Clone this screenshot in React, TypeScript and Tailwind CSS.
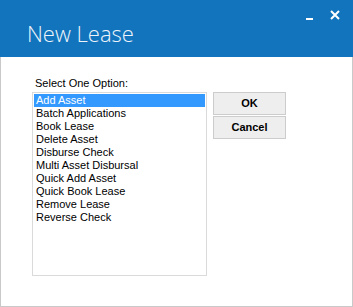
import { useState } from "react";

const options = [
  "Add Asset",
  "Batch Applications",
  "Book Lease",
  "Delete Asset",
  "Disburse Check",
  "Multi Asset Disbursal",
  "Quick Add Asset",
  "Quick Book Lease",
  "Remove Lease",
  "Reverse Check",
];

export default function App() {
  const [selected, setSelected] = useState("Add Asset");

  return (
    <div className="flex h-[307px] w-[353px] flex-col bg-white font-['Liberation_Sans',Arial,sans-serif] text-[11px] text-black">
      {/* Title bar */}
      <div className="flex h-[57px] shrink-0 items-start justify-between bg-[#1174bd]">
        <h1 className="pl-[27px] pt-[18px] font-['Open_Sans',sans-serif] text-[22px] font-light leading-[30px] text-[#eef4fa]">
          New Lease
        </h1>
        <div className="flex items-start gap-[17px] pr-[13px] pt-[10px]">
          <svg width="7" height="10" viewBox="0 0 7 10">
            <rect x="0" y="8" width="7" height="2" fill="#ffffff" />
          </svg>
          <svg width="10" height="10" viewBox="0 0 10 10">
            <path
              d="M1 1 L9 9 M9 1 L1 9"
              stroke="#ffffff"
              strokeWidth="2"
              fill="none"
            />
          </svg>
        </div>
      </div>

      {/* Body */}
      <div className="flex flex-1 flex-col border-x border-b border-[#c9c9c9] pl-[31px] pt-[20px]">
        <p className="mb-[2px] ml-[3px] leading-[13px]">Select One Option:</p>
        <div className="flex items-start gap-[6px]">
          <ul className="h-[184px] w-[175px] border border-[#dadada] p-px">
            {options.map((opt) => (
              <li
                key={opt}
                onClick={() => setSelected(opt)}
                className={`h-[13px] cursor-default pl-[2px] leading-[13px] ${
                  selected === opt ? "bg-[#3399ff] text-white" : ""
                }`}
              >
                {opt}
              </li>
            ))}
          </ul>
          <div className="flex flex-col gap-[1px]">
            <button
              type="button"
              className="h-[23px] w-[73px] border border-[#cccccc] bg-[#eeeeee] text-[11px] font-bold leading-none"
            >
              OK
            </button>
            <button
              type="button"
              className="h-[23px] w-[73px] border border-[#cccccc] bg-[#eeeeee] text-[11px] font-bold leading-none"
            >
              Cancel
            </button>
          </div>
        </div>
      </div>
    </div>
  );
}
